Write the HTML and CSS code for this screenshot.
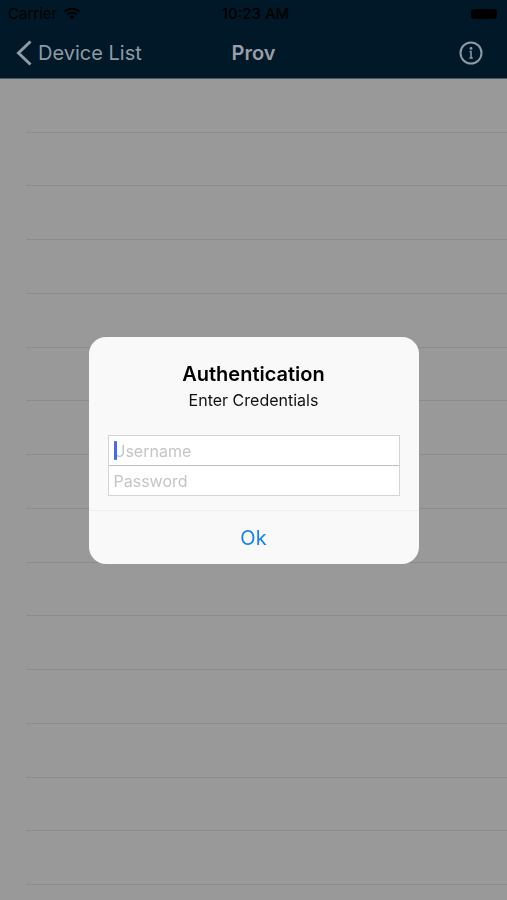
FILE: index.html
```html
<!DOCTYPE html>
<html lang="en">
<head>
    <meta charset="UTF-8">
    <meta name="viewport" content="width=device-width, initial-scale=1.0">
    <title>Prov</title>
    <link rel="stylesheet" href="styles.css">
</head>
<body>
    <header class="top">
        <!-- Status bar -->
        <div class="status">
            <div class="carrier">
                <span>Carrier</span>
                <svg width="18" height="13" viewBox="0 0 18 13" fill="none" stroke="#000" stroke-width="2">
                    <path d="M1.5 4.6a11 11 0 0 1 15 0"/>
                    <path d="M4.3 7.5a7 7 0 0 1 9.4 0"/>
                    <path d="M9 12.5 6.3 9.8a4 4 0 0 1 5.4 0z" fill="#000" stroke="none"/>
                </svg>
            </div>
            <span class="time">10:23 AM</span>
            <div class="battery"></div>
        </div>
        <!-- Navigation bar -->
        <nav class="navbar">
            <a class="back" href="#">
                <svg width="16" height="26" viewBox="0 0 16 26" fill="none" stroke="currentColor" stroke-width="3">
                    <path d="M14.5 1.5 2.5 13l12 11.5"/>
                </svg>
                Device List
            </a>
            <h1 class="title">Prov</h1>
            <button class="info" type="button" aria-label="Info">
                <svg width="24" height="24" viewBox="0 0 24 24" fill="none" stroke="currentColor" stroke-width="2">
                    <circle cx="12" cy="12" r="10.5"/>
                    <circle cx="12" cy="7.4" r="1.4" fill="currentColor" stroke="none"/>
                    <path d="M10.6 10.6H12V17M10.4 17h3.4" stroke-width="1.5"/>
                </svg>
            </button>
        </nav>
    </header>

    <ul class="devices">
        <li></li><li></li><li></li><li></li><li></li>
        <li></li><li></li><li></li><li></li><li></li>
        <li></li><li></li><li></li><li></li><li></li>
    </ul>

    <!-- Login alert -->
    <div class="overlay">
        <form class="alert" role="dialog" aria-labelledby="alert-title">
            <div class="alert-body">
                <h2 id="alert-title">Authentication</h2>
                <p>Enter Credentials</p>
                <div class="fields">
                    <input type="text" name="username" placeholder="Username" aria-label="Username">
                    <input type="password" name="password" placeholder="Password" aria-label="Password">
                    <span class="caret"></span>
                </div>
            </div>
            <button class="ok" type="submit">Ok</button>
        </form>
    </div>
</body>
</html>
```
FILE: styles.css
```css
* { box-sizing: border-box; }
body { margin: 0; min-height: 100vh; display: flex; flex-direction: column; background: #999; font-family: Inter, "Liberation Sans", sans-serif; }
button { font-family: inherit; border: none; background: none; padding: 0; cursor: pointer; }
svg { display: block; }

.top { background: #001828; border-bottom: 1px solid #4b5a64; }
.status { display: grid; grid-template-columns: 1fr auto 1fr; align-items: center; height: 27px; padding: 0 10px 0 8px; font-size: 15px; color: #000; }
.carrier { display: flex; align-items: center; gap: 6px; }
.time { padding-left: 6px; font-weight: 500; }
.battery { justify-self: end; width: 26px; height: 10px; border-radius: 3px; background: #000; }

.navbar { display: grid; grid-template-columns: 1fr auto 1fr; align-items: center; height: 51px; padding: 0 16px; color: #8f9ba4; }
.back { display: flex; align-items: center; gap: 6px; font-size: 20px; color: inherit; text-decoration: none; }
.title { margin: 0; font-size: 20px; font-weight: 600; color: #999fa4; }
.info { justify-self: end; margin-right: 8px; color: inherit; }

.devices { flex: 1; display: flex; flex-direction: column; margin: 0; padding: 0 0 15px 26px; list-style: none; }
.devices li { flex: 1; border-bottom: 1px solid #8c8c8d; }

.overlay { position: fixed; inset: 0; display: grid; place-items: center; padding-top: 1px; }
.alert { width: 330px; max-width: 90%; border-radius: 17px; background: #f9f9f9; text-align: center; overflow: hidden; }
.alert-body { padding: 24px 19px 14px; }
.alert h2 { margin: 0; font-size: 20px; line-height: 26px; font-weight: 600; color: #000; }
.alert p { margin: 0 0 22px; font-size: 16px; line-height: 26px; color: #111; }
.fields { position: relative; display: flex; flex-direction: column; border: 1px solid #d4d4d4; background: #fff; }
.fields input { width: 100%; height: 29px; padding: 0 5px; border: none; outline: none; background: none; font-family: inherit; font-size: 16px; }
.fields input:first-child { height: 30px; border-bottom: 1px solid #c0c0c0; }
.fields input::placeholder { color: #c5c5c7; }
.caret { position: absolute; left: 5px; top: 5px; width: 3px; height: 19px; border-radius: 1px; background: #4a6be6; }
.ok { width: 100%; height: 54px; border-top: 1px solid #efefef; font-size: 20px; color: #1680f5; }
```
